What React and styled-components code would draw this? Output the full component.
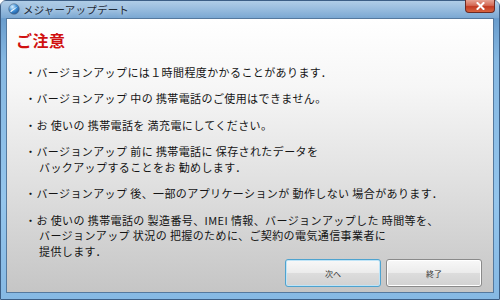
import styled, { createGlobalStyle } from "styled-components"

const GlobalStyle = createGlobalStyle`
  html, body {
    margin: 0;
    padding: 0;
    width: 500px;
    height: 300px;
    overflow: hidden;
    background: #ffffff;
  }
`

const notes = [
  { lines: ["・バージョンアップには１時間程度かかることがあります．"] },
  { lines: ["・バージョンアップ 中の 携帯電話のご使用はできません。"] },
  { lines: ["・お 使いの 携帯電話を 満充電にしてください。"] },
  {
    lines: [
      "・バージョンアップ 前に 携帯電話に 保存されたデータを",
      "バックアップすることをお 勧めします．",
    ],
  },
  { lines: ["・バージョンアップ 後、一部のアプリケーションが 動作しない 場合があります．"] },
  {
    lines: [
      "・お 使いの 携帯電話の 製造番号、IMEI 情報、バージョンアップした 時間等を、",
      "バージョンアップ 状況の 把握のために、ご契約の電気通信事業者に",
      "提供します．",
    ],
  },
]

export default function App() {
  return (
    <>
      <GlobalStyle />
      <Window>
        <TitleBar>
          <AppIcon viewBox="0 0 12 12">
            <defs>
              <radialGradient id="globe" cx="0.35" cy="0.3" r="0.8">
                <stop offset="0" stopColor="#d8f0ff" />
                <stop offset="0.5" stopColor="#3f8fd6" />
                <stop offset="1" stopColor="#1b4f8f" />
              </radialGradient>
            </defs>
            <circle cx="6" cy="6" r="5.3" fill="url(#globe)" stroke="#5a6f86" strokeWidth="0.6" />
            <path d="M2.2 8.2 C4 6.8 6.5 5.2 9.8 3.6 C7.5 5.6 5.2 7.4 3 9.2 Z" fill="#ffffff" opacity="0.9" />
          </AppIcon>
          <TitleText>メジャーアップデート</TitleText>
          <CloseButton>
            <svg width="9" height="8" viewBox="0 0 9 8">
              <path d="M1.5 1 L7.5 7 M7.5 1 L1.5 7" stroke="#ffffff" strokeWidth="2" strokeLinecap="square" />
            </svg>
          </CloseButton>
        </TitleBar>
        <Body>
          <Heading>ご注意</Heading>
          <NoteList>
            {notes.map((note, i) => (
              <Note key={i}>
                {note.lines.map((line, j) => (
                  <Line key={j} $indent={j > 0}>{line}</Line>
                ))}
              </Note>
            ))}
          </NoteList>
          <Footer>
            <DialogButton $primary>次へ</DialogButton>
            <DialogButton>終了</DialogButton>
          </Footer>
        </Body>
      </Window>
    </>
  )
}

const Window = styled.div`
  width: 500px;
  height: 300px;
  box-sizing: border-box;
  display: flex;
  flex-direction: column;
  border: 1px solid #3d5f86;
  border-radius: 6px 6px 0 0;
  background: linear-gradient(180deg, #86b2da 0px, #6a9dcd 18px, #86b8e2 60px, #94c5ec 200px, #86b9e4 100%);
  font-family: "Noto Sans CJK JP", "Noto Sans", sans-serif;
`

const TitleBar = styled.div`
  position: relative;
  height: 19px;
  display: flex;
  align-items: center;
  padding-left: 7px;
  gap: 3px;
  background: linear-gradient(180deg, rgba(255,255,255,0.35), rgba(255,255,255,0.1));
`

const AppIcon = styled.svg`
  width: 12px;
  height: 12px;
`

const TitleText = styled.span`
  font-size: 10.5px;
  color: #1f2a36;
  letter-spacing: 0.2px;
  text-shadow: 0 0 6px rgba(255,255,255,0.9);
`

const CloseButton = styled.div`
  position: absolute;
  top: -1px;
  right: 4px;
  width: 30px;
  height: 13px;
  display: flex;
  align-items: center;
  justify-content: center;
  border: 1px solid #6b2a24;
  border-top: none;
  border-radius: 0 0 4px 4px;
  background: linear-gradient(180deg, #e7a393 0%, #d46a55 45%, #c23a22 55%, #d8643f 100%);
  box-sizing: border-box;
`

const Body = styled.div`
  flex: 1;
  margin: 0 5px 6px 5px;
  border: 1px solid #55799e;
  display: flex;
  flex-direction: column;
  padding: 11px 11px 5px 9px;
  background: linear-gradient(180deg, #ffffff 0%, #f6f6f6 25%, #e0e0e0 60%, #c5c5c5 100%);
`

const Heading = styled.h1`
  margin: 0 0 15px 0;
  font-size: 16px;
  line-height: 20px;
  font-weight: 700;
  color: #d01010;
  letter-spacing: 0.5px;
`

const NoteList = styled.div`
  display: flex;
  flex-direction: column;
  gap: 11px;
  padding-left: 9px;
`

const Note = styled.div`
  display: flex;
  flex-direction: column;
`

const Line = styled.span`
  font-size: 11px;
  line-height: 15.5px;
  color: #141414;
  letter-spacing: 0.4px;
  white-space: pre;
  padding-left: ${p => (p.$indent ? "14px" : "0")};
`

const Footer = styled.div`
  margin-top: auto;
  display: flex;
  justify-content: flex-end;
  gap: 5px;
`

const DialogButton = styled.button`
  width: 96px;
  height: 28px;
  font-family: "Noto Sans CJK JP", sans-serif;
  font-size: 8px;
  color: #333333;
  border-radius: 3px;
  border: 1px solid ${p => (p.$primary ? "#4fa3cf" : "#8a8a8a")};
  box-shadow: ${p => (p.$primary ? "inset 0 0 0 1px #bfe4f7" : "inset 0 0 0 1px #ffffff")};
  background: linear-gradient(180deg, #f8f8f8 0%, #ececec 48%, #dcdcdc 52%, #d2d2d2 100%);
  padding: 0;
`
